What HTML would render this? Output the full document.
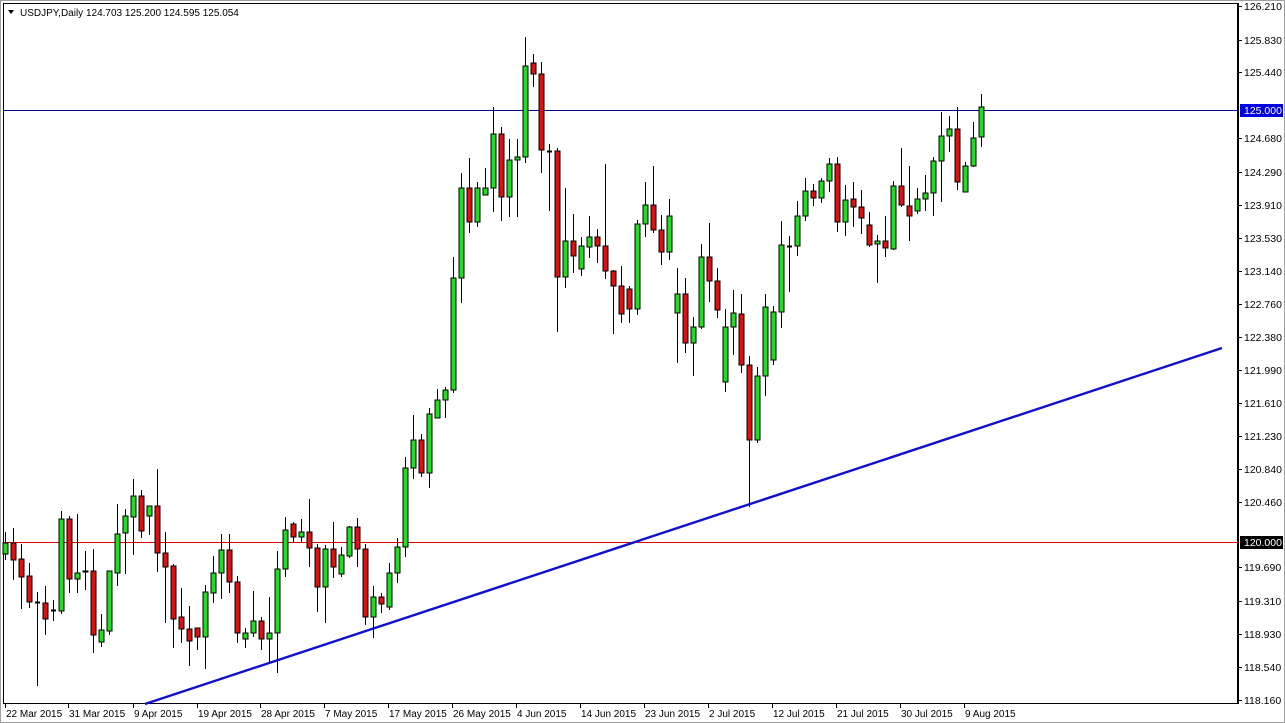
<!DOCTYPE html>
<html><head><meta charset="utf-8"><style>
html,body{margin:0;padding:0;background:#fff;}
svg{display:block;}
text{font-family:"Liberation Sans",sans-serif;font-size:10.5px;fill:#000;}
text.dt{font-size:10px;}
</style></head><body>
<svg id="c" width="1285" height="723" xmlns="http://www.w3.org/2000/svg">
<rect x="0" y="0" width="1285" height="723" fill="#fff"/>
<rect x="0.5" y="0.5" width="1284" height="722" fill="none" stroke="#a0a0a0"/>
<rect x="3.5" y="3.5" width="1234" height="700" fill="none" stroke="#000"/>
<line x1="1238.5" y1="3" x2="1238.5" y2="704" stroke="#000"/>
<line x1="4" y1="110.5" x2="1238" y2="110.5" stroke="#00008b"/>
<line x1="4" y1="542.5" x2="1238" y2="542.5" stroke="#e00000"/>
<line x1="145" y1="704" x2="1222" y2="348" stroke="#1010d0" stroke-width="2.4"/>
<g id="cs"></g>
<text x="20" y="16" style="font-size:10px">USDJPY,Daily  124.703 125.200 124.595 125.054</text>
<path d="M8 10 L14 10 L11 14 Z" fill="#000"/>
<g id="ax"></g>
<rect x="1240" y="104" width="43" height="13" fill="#0000e0"/>
<text x="1244" y="114" style="fill:#fff">125.000</text>
<rect x="1240" y="536" width="43" height="13" fill="#000"/>
<text x="1244" y="546" style="fill:#fff">120.000</text>
</svg>
<script>
var d=[[543,554,532,560,1],[543,560,528,580,0],[559,577,544,609,0],[576,602,563,608,0],[602,602,592,686,0],[603,619,586,635,0],[610,610,600,621,0],[519,611,511,614,1],[519,579,516,593,0],[573,579,514,593,1],[571,572,551,590,1],[571,635,549,653,0],[630,642,614,647,1],[571,631,571,635,1],[534,573,504,586,1],[516,533,509,574,1],[496,517,479,555,1],[496,531,490,538,0],[506,516,506,535,1],[506,553,469,572,0],[553,567,532,623,0],[566,619,564,648,0],[617,629,588,643,0],[629,641,606,666,0],[628,637,628,650,0],[592,637,585,669,1],[573,593,556,603,1],[550,573,534,599,1],[550,582,534,593,0],[582,633,576,643,0],[633,639,628,648,1],[621,633,591,637,1],[621,639,617,650,0],[633,639,597,662,1],[569,633,551,673,1],[530,569,517,577,1],[524,537,522,542,0],[532,537,519,543,1],[532,548,499,567,0],[548,587,544,612,0],[549,587,545,623,1],[549,567,522,578,0],[555,574,547,577,1],[527,556,526,558,1],[527,549,518,567,0],[549,617,544,625,0],[597,617,586,638,1],[597,604,593,613,0],[573,607,563,610,1],[547,573,538,583,1],[468,547,457,557,1],[440,468,415,479,1],[440,473,434,477,0],[414,473,408,488,1],[400,418,389,418,1],[390,400,387,418,1],[278,390,257,393,1],[188,278,173,303,1],[188,222,158,233,0],[188,222,182,227,1],[188,195,168,195,1],[134,188,107,212,1],[134,197,127,221,0],[160,197,139,217,1],[157,160,139,217,1],[66,157,37,163,1],[63,74,54,87,0],[74,150,62,173,0],[151,151,144,211,0],[151,277,148,332,0],[241,277,188,288,1],[241,256,214,273,0],[246,269,237,276,1],[237,247,216,258,1],[237,246,229,263,0],[246,271,164,279,0],[271,286,270,334,0],[286,314,266,323,0],[289,309,286,323,0],[224,309,220,315,1],[205,224,182,237,1],[205,230,166,233,0],[230,252,215,265,0],[216,252,199,260,1],[294,313,268,363,1],[294,343,278,353,0],[327,343,317,376,1],[257,327,244,329,1],[257,281,223,302,0],[281,310,268,318,0],[327,382,309,392,1],[313,327,290,355,1],[314,365,294,373,0],[365,440,356,507,0],[376,440,367,443,1],[307,376,294,396,1],[312,360,306,365,1],[245,312,221,328,1],[246,246,236,292,0],[216,246,201,256,1],[191,216,178,221,1],[191,198,184,206,0],[181,198,178,203,1],[164,181,158,192,1],[164,222,157,232,0],[200,222,185,236,1],[199,207,182,227,0],[207,218,190,234,0],[225,245,212,247,0],[241,244,235,283,1],[241,248,216,257,0],[186,249,181,250,1],[186,205,148,207,0],[206,216,166,241,0],[199,211,188,214,1],[193,199,175,211,1],[161,193,157,216,1],[136,161,112,202,1],[129,136,116,152,1],[129,182,107,190,0],[166,192,162,192,1],[138,166,122,167,1],[107,137,94,147,1]];
var g=document.getElementById('cs'),s='';
d.forEach(function(c,i){var x=5+8*i;
s+='<line x1="'+(x+.5)+'" y1="'+c[2]+'" x2="'+(x+.5)+'" y2="'+c[3]+'" stroke="#000"/>';
if(c[1]-c[0]<1){s+='<line x1="'+(x-2)+'" y1="'+(c[0]+.5)+'" x2="'+(x+3)+'" y2="'+(c[0]+.5)+'" stroke="#000" stroke-width="2"/>';}
else s+='<rect x="'+(x-2)+'" y="'+c[0]+'" width="5" height="'+(c[1]-c[0])+'" fill="'+(c[4]?'#22dd22':'#dd1111')+'" stroke="#000" stroke-width="1"/>';});
g.innerHTML=s;
var L=[["126.210",6],["125.830",40],["125.440",72],["124.680",138],["124.290",172],["123.910",205],["123.530",238],["123.140",271],["122.760",304],["122.380",337],["121.990",370],["121.610",403],["121.230",436],["120.840",469],["120.460",502],["119.690",567],["119.310",601],["118.930",634],["118.540",667],["118.160",700]];
var a='';L.forEach(function(l){a+='<line x1="1238" y1="'+(l[1]+.5)+'" x2="1242" y2="'+(l[1]+.5)+'" stroke="#000"/><text x="1244" y="'+(l[1]+4)+'">'+l[0]+'</text>';});
var D=[["22 Mar 2015",5],["31 Mar 2015",68],["9 Apr 2015",133],["19 Apr 2015",197],["28 Apr 2015",260],["7 May 2015",324],["17 May 2015",388],["26 May 2015",452],["4 Jun 2015",516],["14 Jun 2015",580],["23 Jun 2015",644],["2 Jul 2015",708],["12 Jul 2015",772],["21 Jul 2015",836],["30 Jul 2015",900],["9 Aug 2015",964]];
D.forEach(function(l){a+='<line x1="'+(l[1]+.5)+'" y1="703" x2="'+(l[1]+.5)+'" y2="708" stroke="#000"/><text class="dt" x="'+(l[1]+1)+'" y="717">'+l[0]+'</text>';});
document.getElementById('ax').innerHTML=a;
</script>
</body></html>
